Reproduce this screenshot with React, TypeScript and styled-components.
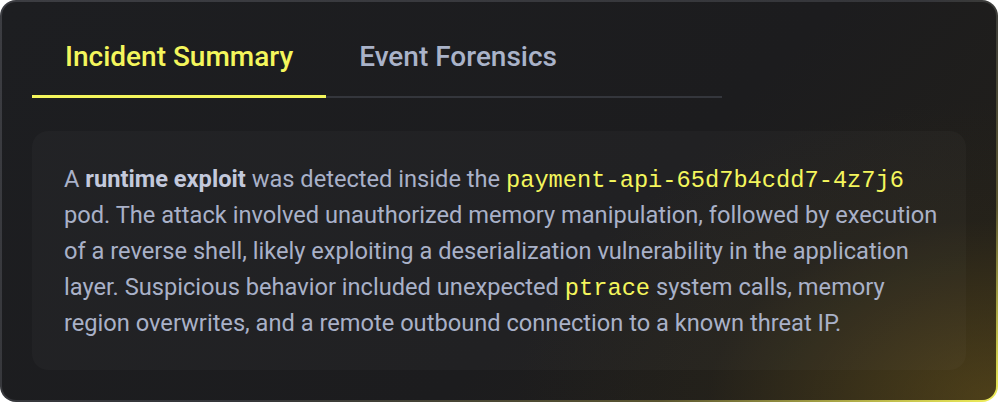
import React, { useState } from "react";
import styled, { createGlobalStyle } from "styled-components";

const GlobalStyle = createGlobalStyle`
  html, body { margin: 0; padding: 0; background: #ffffff; }
  body { font-family: Roboto, "Noto Sans", "Liberation Sans", sans-serif; }
  * { box-sizing: border-box; }
`;

const Card = styled.div`
  width: 998px;
  height: 402px;
  border: 2px solid transparent;
  border-radius: 16px;
  padding: 14px 30px 30px;
  display: flex;
  flex-direction: column;
  background:
    radial-gradient(ellipse 480px 300px at 100% 100%, rgba(120, 95, 25, 0.5), rgba(60, 50, 20, 0.15) 60%, rgba(0, 0, 0, 0) 100%) padding-box,
    linear-gradient(135deg, #1d1e21 0%, #1c1c1e 60%, #232019 100%) padding-box,
    linear-gradient(150deg, #3c3d42 0%, #35363a 55%, #5a5530 80%, #f2f05a 100%) border-box;
`;

const TabList = styled.div`
  display: flex;
  width: 690px;
  border-bottom: 2px solid #34363c;
`;

const Tab = styled.button<{ $active?: boolean }>`
  appearance: none;
  background: none;
  border: none;
  border-bottom: 3px solid ${(p) => (p.$active ? "#f4f65c" : "transparent")};
  margin-bottom: -2px;
  padding: 25px 33px 22px;
  font-family: Roboto, "Noto Sans", sans-serif;
  font-size: 28px;
  font-weight: 500;
  line-height: 32px;
  color: ${(p) => (p.$active ? "#f4f65c" : "#aab3c9")};
  cursor: pointer;
`;

const Panel = styled.div`
  margin-top: 33px;
  border-radius: 16px;
  background: rgba(255, 255, 255, 0.025);
  padding: 30px 20px 28px 32px;
  flex: 1;
`;

const Text = styled.p`
  margin: 0;
  font-family: Roboto, "Noto Sans", sans-serif;
  font-size: 23.65px;
  line-height: 36px;
  color: #a9b1c8;
`;

const Strong = styled.strong`
  font-weight: 700;
  color: #c3c9dc;
`;

const Code = styled.code`
  font-family: "Liberation Mono", "DejaVu Sans Mono", monospace;
  font-size: 23.7px;
  line-height: 1;
  color: #f4f65c;
`;

export default function App() {
  const [tab, setTab] = useState(0);
  return (
    <>
      <GlobalStyle />
      <Card>
        <TabList>
          <Tab $active={tab === 0} onClick={() => setTab(0)}>Incident Summary</Tab>
          <Tab $active={tab === 1} onClick={() => setTab(1)}>Event Forensics</Tab>
        </TabList>
        <Panel>
          <Text>
            A <Strong>runtime exploit</Strong> was detected inside the{" "}
            <Code>payment-api-65d7b4cdd7-4z7j6</Code> pod. The attack involved unauthorized memory
            manipulation, followed by execution of a reverse shell, likely exploiting a
            deserialization vulnerability in the application layer. Suspicious behavior included
            unexpected <Code>ptrace</Code> system calls, memory region overwrites, and a remote
            outbound connection to a known threat IP.
          </Text>
        </Panel>
      </Card>
    </>
  );
}
